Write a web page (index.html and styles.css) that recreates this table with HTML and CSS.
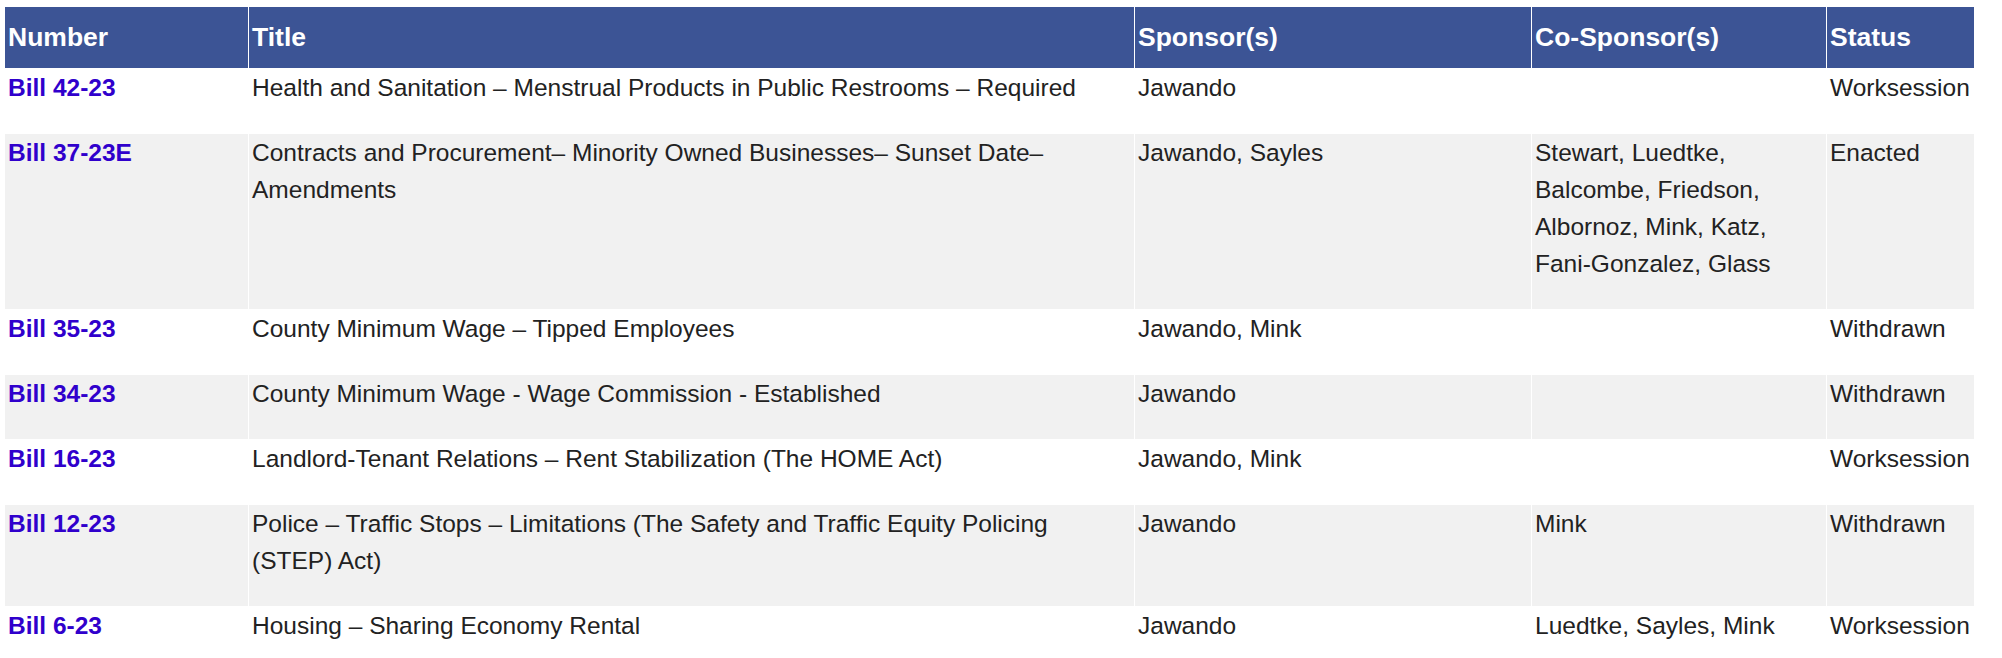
FILE: index.html
```html
<!DOCTYPE html>
<html lang="en">
<head>
<meta charset="utf-8">
<title>Bills</title>
<link rel="stylesheet" href="styles.css">
</head>
<body>
<div class="wrap">
<table class="bills">
  <colgroup>
    <col class="c-num">
    <col class="c-title">
    <col class="c-sp">
    <col class="c-co">
    <col class="c-st">
  </colgroup>
  <thead>
    <tr><th>Number</th><th>Title</th><th>Sponsor(s)</th><th>Co-Sponsor(s)</th><th>Status</th></tr>
  </thead>
  <tbody>
    <tr>
      <td><a href="#">Bill 42-23</a></td>
      <td>Health and Sanitation – Menstrual Products in Public Restrooms – Required</td>
      <td>Jawando</td>
      <td></td>
      <td>Worksession</td>
    </tr>
    <tr>
      <td><a href="#">Bill 37-23E</a></td>
      <td>Contracts and Procurement– Minority Owned Businesses– Sunset Date– Amendments</td>
      <td>Jawando, Sayles</td>
      <td>Stewart, Luedtke, Balcombe, Friedson, Albornoz, Mink, Katz, Fani-Gonzalez, Glass</td>
      <td>Enacted</td>
    </tr>
    <tr>
      <td><a href="#">Bill 35-23</a></td>
      <td>County Minimum Wage – Tipped Employees</td>
      <td>Jawando, Mink</td>
      <td></td>
      <td>Withdrawn</td>
    </tr>
    <tr>
      <td><a href="#">Bill 34-23</a></td>
      <td>County Minimum Wage - Wage Commission - Established</td>
      <td>Jawando</td>
      <td></td>
      <td>Withdrawn</td>
    </tr>
    <tr>
      <td><a href="#">Bill 16-23</a></td>
      <td>Landlord-Tenant Relations – Rent Stabilization (The HOME Act)</td>
      <td>Jawando, Mink</td>
      <td></td>
      <td>Worksession</td>
    </tr>
    <tr>
      <td><a href="#">Bill 12-23</a></td>
      <td>Police – Traffic Stops – Limitations (The Safety and Traffic Equity Policing (STEP) Act)</td>
      <td>Jawando</td>
      <td>Mink</td>
      <td>Withdrawn</td>
    </tr>
    <tr>
      <td><a href="#">Bill 6-23</a></td>
      <td>Housing – Sharing Economy Rental</td>
      <td>Jawando</td>
      <td>Luedtke, Sayles, Mink</td>
      <td>Worksession</td>
    </tr>
  </tbody>
</table>
</div>
</body>
</html>
```

FILE: styles.css
```css
html, body {
  margin: 0;
  padding: 0;
  background: #ffffff;
}

.wrap {
  padding: 7px 4px 0 4px;
}

.bills {
  width: 1970px;
  table-layout: fixed;
  border-collapse: collapse;
  font-family: "Liberation Sans", Arial, sans-serif;
  color: #222222;
}

.c-num { width: 244px; }
.c-title { width: 886px; }
.c-sp { width: 397px; }
.c-co { width: 295px; }
.c-st { width: 148px; }

.bills th,
.bills td {
  border: 1px solid #ffffff;
  text-align: left;
  vertical-align: top;
}

.bills th {
  background: #3c5495;
  color: #ffffff;
  font-size: 26.5px;
  font-weight: bold;
  line-height: 37px;
  padding: 12px 2px 12px 3px;
}

.bills thead tr th {
  border-top: none;
}

.bills td {
  font-size: 24.5px;
  line-height: 37px;
  padding: 0 2px 27px 3px;
}

.bills tbody tr:nth-child(even) td {
  background: #f1f1f1;
}

.bills a {
  color: #3000cc;
  font-weight: bold;
  text-decoration: none;
}
```
